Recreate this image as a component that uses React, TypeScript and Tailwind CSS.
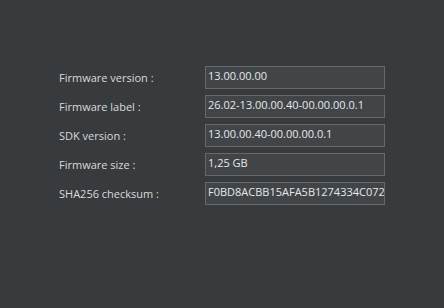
export default function App() {
  const rows = [
    { label: "Firmware version :", value: "13.00.00.00" },
    { label: "Firmware label :", value: "26.02-13.00.00.40-00.00.00.0.1" },
    { label: "SDK version :", value: "13.00.00.40-00.00.00.0.1" },
    { label: "Firmware size :", value: "1,25 GB" },
    { label: "SHA256 checksum :", value: "F0BD8ACBB15AFA5B1274334C072" },
  ];

  return (
    <div className="w-[444px] h-[308px] bg-[#383b3d] pl-[59px] pt-[66px] font-['Open_Sans',sans-serif] text-[11px]">
      <div className="flex flex-col gap-[6px]">
        {rows.map((r) => (
          <div key={r.label} className="flex items-start h-[23px]">
            <div className="w-[146px] text-[#d8dadc] leading-none pt-[6px]">{r.label}</div>
            <div className="w-[180px] h-[23px] border border-[#66696b] bg-[#424547] text-[#e2e8ee] pl-[2px] pt-[1px] overflow-hidden whitespace-nowrap leading-[16px]">
              {r.value}
            </div>
          </div>
        ))}
      </div>
    </div>
  );
}
